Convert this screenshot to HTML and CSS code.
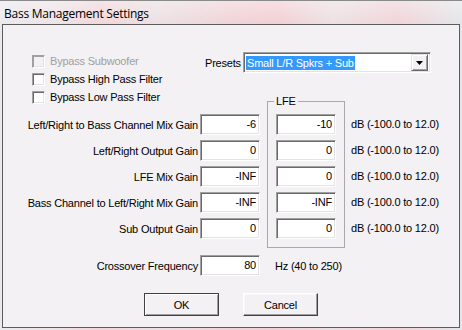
FILE: index.html
```html
<!DOCTYPE html>
<html lang="en">
<head>
    <meta charset="UTF-8">
    <title>Bass Management Settings</title>
    <link rel="stylesheet" href="styles.css">
</head>
<body>
    <div class="window">
        <div class="titlebar">
            <span class="title">Bass Management Settings</span>
        </div>
        <div class="client">
            <div class="top">
                <div class="checks">
                    <label class="check disabled"><span class="box"></span>Bypass Subwoofer</label>
                    <label class="check"><span class="box"></span>Bypass High Pass Filter</label>
                    <label class="check"><span class="box"></span>Bypass Low Pass Filter</label>
                </div>
                <div class="presets">
                    <span class="presets-label">Presets</span>
                    <div class="combo">
                        <span class="combo-value">Small L/R Spkrs + Sub</span>
                        <span class="combo-btn">
                            <svg width="7" height="4" viewBox="0 0 7 4"><path d="M0 0H7L3.5 4Z" fill="#000"/></svg>
                        </span>
                    </div>
                </div>
            </div>

            <div class="gains">
                <div class="main-col">
                    <div class="row"><span>Left/Right to Bass Channel Mix Gain</span><input class="field" value="-6"></div>
                    <div class="row"><span>Left/Right Output Gain</span><input class="field" value="0"></div>
                    <div class="row"><span>LFE Mix Gain</span><input class="field" value="-INF"></div>
                    <div class="row"><span>Bass Channel to Left/Right Mix Gain</span><input class="field" value="-INF"></div>
                    <div class="row"><span>Sub Output Gain</span><input class="field" value="0"></div>
                </div>
                <div class="group">
                    <span class="legend">LFE</span>
                    <input class="field" value="-10">
                    <input class="field" value="0">
                    <input class="field" value="0">
                    <input class="field" value="-INF">
                    <input class="field" value="0">
                </div>
                <div class="units-col">
                    <div class="unit">dB (-100.0 to 12.0)</div>
                    <div class="unit">dB (-100.0 to 12.0)</div>
                    <div class="unit">dB (-100.0 to 12.0)</div>
                    <div class="unit">dB (-100.0 to 12.0)</div>
                    <div class="unit">dB (-100.0 to 12.0)</div>
                </div>
            </div>

            <div class="crossover">
                <div class="row"><span>Crossover Frequency</span><input class="field" value="80"></div>
                <span class="hz">Hz (40 to 250)</span>
            </div>

            <div class="buttons">
                <button class="btn default">OK</button>
                <button class="btn">Cancel</button>
            </div>
        </div>
    </div>
</body>
</html>
```

FILE: styles.css
```css
body {
    margin: 0;
    font-family: "Liberation Sans", Arial, sans-serif;
    font-size: 11px;
    letter-spacing: -0.2px;
    color: #000;
}

.window {
    width: 462px;
    height: 330px;
    box-sizing: border-box;
    border-top: 1px solid #8a8a8a;
    background: linear-gradient(90deg, #ebe9ec 0%, #ede4e7 12%, #f1d6da 22%, #ebe0e3 34%, #f0d3d7 50%, #f2cfd4 60%, #ece0e3 72%, #f0d4d8 86%, #e4e6e9 100%);
}

.titlebar {
    height: 23px;
    padding-left: 4px;
    display: flex;
    align-items: center;
    background: linear-gradient(180deg, rgba(255, 255, 255, 0.35), rgba(255, 255, 255, 0));
}

.title {
    font-family: "Open Sans", "Noto Sans", sans-serif;
    font-size: 12px;
    letter-spacing: -0.25px;
    padding-top: 2px;
}

.client {
    margin: 0 2px;
    height: 304px;
    box-sizing: border-box;
    border: 1px solid #5c5c5c;
    background-color: #f3f1f3;
    padding-top: 27px;
}

/* top block: checkboxes + presets */
.top {
    display: flex;
    height: 49px;
}

.checks {
    width: 202px;
    box-sizing: border-box;
    padding-left: 29px;
}

.check {
    height: 18px;
    display: flex;
    align-items: center;
    gap: 5px;
    white-space: nowrap;
}

.box {
    width: 13px;
    height: 13px;
    box-sizing: border-box;
    border: 1px solid;
    border-color: #a0a0a0 #fff #fff #a0a0a0;
    box-shadow: inset 1px 1px 0 #696969, inset -1px -1px 0 #e3e3e3;
    background-color: #fff;
}

.check.disabled {
    color: #a0a0a0;
}

.check.disabled .box {
    background-color: #f3f1f3;
    box-shadow: inset 1px 1px 0 #a0a0a0, inset -1px -1px 0 #e3e3e3;
}

.presets {
    display: flex;
    align-items: center;
    height: 21px;
}

.presets-label {
    width: 38px;
}

.combo {
    width: 188px;
    height: 21px;
    box-sizing: border-box;
    border: 1px solid;
    border-color: #a0a0a0 #fff #fff #a0a0a0;
    box-shadow: inset 1px 1px 0 #696969, inset -1px -1px 0 #e3e3e3;
    background-color: #fff;
    display: flex;
    align-items: center;
    padding: 0 2px 0 2px;
}

.combo-value {
    background-color: #3399ff;
    color: #fff;
    height: 14px;
    line-height: 14px;
    padding: 0 1px;
}

.combo-btn {
    margin-left: auto;
    width: 17px;
    height: 17px;
    box-sizing: border-box;
    border: 1px solid;
    border-color: #e3e3e3 #696969 #696969 #e3e3e3;
    box-shadow: inset 1px 1px 0 #fff, inset -1px -1px 0 #a0a0a0;
    background-color: #f3f1f3;
    display: flex;
    align-items: center;
    justify-content: center;
}

/* gain rows */
.gains {
    display: flex;
    align-items: flex-start;
}

.main-col {
    width: 257px;
    padding-top: 13px;
    display: flex;
    flex-direction: column;
    gap: 5px;
}

.row {
    height: 21px;
    display: flex;
    justify-content: flex-end;
    align-items: center;
    gap: 2px;
    white-space: nowrap;
}

.field {
    width: 60px;
    height: 21px;
    margin: 0;
    box-sizing: border-box;
    border: 1px solid;
    border-color: #a0a0a0 #fff #fff #a0a0a0;
    box-shadow: inset 1px 1px 0 #696969, inset -1px -1px 0 #e3e3e3;
    background-color: #fff;
    padding: 0 3px 1px 2px;
    text-align: right;
    font-family: "Liberation Sans", Arial, sans-serif;
    font-size: 11px;
    letter-spacing: -0.2px;
    color: #000;
    outline: none;
}

.group {
    position: relative;
    margin-left: 7px;
    width: 78px;
    height: 147px;
    box-sizing: border-box;
    border: 1px solid #a9a9a9;
    padding: 12px 0 0 8px;
    display: flex;
    flex-direction: column;
    gap: 5px;
}

.legend {
    position: absolute;
    top: -7px;
    left: 6px;
    padding: 0 2px;
    line-height: 13px;
    background-color: #f3f1f3;
}

.units-col {
    margin-left: 6px;
    padding-top: 13px;
    display: flex;
    flex-direction: column;
    gap: 5px;
}

.unit {
    height: 21px;
    line-height: 21px;
    white-space: nowrap;
}

.crossover {
    display: flex;
    align-items: center;
    margin-top: 7px;
}

.crossover .row {
    width: 257px;
}

.hz {
    margin-left: 15px;
}

/* dialog buttons */
.buttons {
    display: flex;
    gap: 24px;
    margin-top: 17px;
    padding-left: 141px;
}

.btn {
    width: 75px;
    height: 23px;
    margin: 0;
    box-sizing: border-box;
    border: 1px solid;
    border-color: #fff #404040 #404040 #fff;
    box-shadow: inset -1px -1px 0 #a0a0a0, inset 1px 1px 0 #f8f8f8;
    background-color: #f3f1f3;
    font-family: "Liberation Sans", Arial, sans-serif;
    font-size: 11px;
    letter-spacing: -0.2px;
    color: #000;
    padding: 0;
}

.btn.default {
    border-color: #404040;
    box-shadow: inset 1px 1px 0 #fff, inset -1px -1px 0 #a0a0a0;
}
```
